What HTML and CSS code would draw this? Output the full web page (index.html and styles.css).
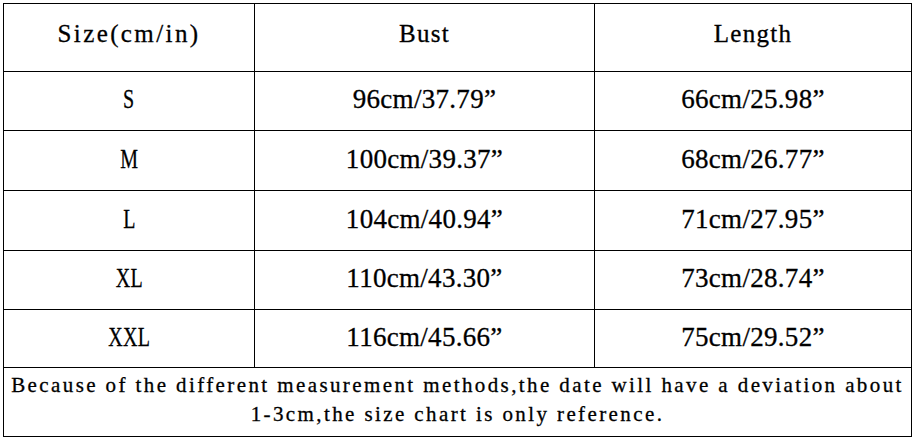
FILE: index.html
```html
<!DOCTYPE html>
<html>
<head>
<meta charset="utf-8">
<link rel="stylesheet" href="styles.css">
</head>
<body>
<table class="chart">
  <colgroup>
    <col class="c1"><col class="c2"><col class="c3">
  </colgroup>
  <tr class="head">
    <th class="first">Size(cm/in)</th><th>Bust</th><th>Length</th>
  </tr>
  <tr class="r59"><td><span class="sz">S</span></td><td>96cm/37.79”</td><td>66cm/25.98”</td></tr>
  <tr class="r60"><td><span class="sz">M</span></td><td>100cm/39.37”</td><td>68cm/26.77”</td></tr>
  <tr class="r60"><td><span class="sz">L</span></td><td>104cm/40.94”</td><td>71cm/27.95”</td></tr>
  <tr class="r59"><td><span class="sz">XL</span></td><td>110cm/43.30”</td><td>73cm/28.74”</td></tr>
  <tr class="r58"><td><span class="sz">XXL</span></td><td>116cm/45.66”</td><td>75cm/29.52”</td></tr>
  <tr class="note">
    <td colspan="3">Because of the different measurement methods,the date will have a deviation about<br>1-3cm,the size chart is only reference.</td>
  </tr>
</table>
</body>
</html>
```
FILE: styles.css
```css
html, body {
  margin: 0;
  padding: 0;
  background: #fff;
}
body {
  padding: 3px 0 0 3px;
}
.chart {
  border-collapse: collapse;
  table-layout: fixed;
  width: 908px;
  font-family: "Liberation Serif", "Times New Roman", serif;
  color: #000;
  -webkit-text-stroke: 0.3px #000;
}
.c1 { width: 251px; }
.c2 { width: 340px; }
.c3 { width: 317px; }
.chart th, .chart td {
  border: 1px solid #000;
  padding: 0;
  text-align: center;
  vertical-align: middle;
  font-weight: normal;
}
.head { height: 68px; }
.head th {
  font-size: 25px;
  letter-spacing: 1.3px;
  padding-bottom: 8px;
}
.head th.first {
  letter-spacing: 2.4px;
}
.r59 { height: 59px; }
.r60 { height: 60px; }
.r58 { height: 58px; }
.chart td {
  font-size: 27px;
  letter-spacing: 0.3px;
  padding-bottom: 3px;
}
.sz {
  display: inline-block;
  transform: scaleX(0.74);
}
.note { height: 69px; }
.note td {
  font-size: 21px;
  line-height: 29px;
  letter-spacing: 2.4px;
  padding-bottom: 4px;
}
```
